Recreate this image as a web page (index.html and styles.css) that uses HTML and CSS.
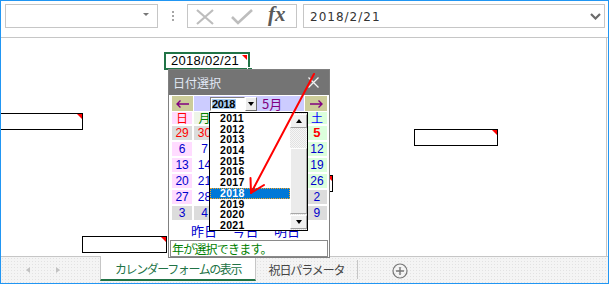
FILE: index.html
```html
<!DOCTYPE html>
<html lang="ja">
<head>
<meta charset="utf-8">
<title>日付選択</title>
<link rel="stylesheet" href="styles.css">
</head>
<body>
<div class="window">
  <div class="formula-bar">
    <div class="name-box"><span class="nb-arrow"></span></div>
    <div class="grip"><i></i><i></i><i></i></div>
    <div class="fx-buttons">
      <svg class="fx-icons" width="108" height="22" viewBox="0 0 108 22">
        <path d="M9 5 L25 19 M25 5 L9 19" stroke="#bdbdbd" stroke-width="2.2" fill="none"/>
        <path d="M44 12 L50 18 L64 5" stroke="#bdbdbd" stroke-width="2.6" fill="none"/>
      </svg>
      <span class="fx">fx</span>
    </div>
    <div class="formula-box">
      <span class="formula-text">2018/2/21</span>
      <svg class="chev" width="11" height="7" viewBox="0 0 11 7"><path d="M1 1 L5.5 5.5 L10 1" stroke="#6b6b6b" stroke-width="2.2" fill="none"/></svg>
    </div>
  </div>

  <div class="sheet">
    <div class="cell cell-active">2018/02/21<span class="note"></span><span class="handle"></span></div>
    <div class="cell cell-a"><span class="note"></span></div>
    <div class="cell cell-b"><span class="note"></span></div>
    <div class="cell cell-c"><span class="note"></span></div>
    <div class="cell cell-d"><span class="note"></span></div>
  </div>

  <div class="tabs">
    <div class="tab-nav"><span class="tri-l"></span><span class="tri-r"></span></div>
    <div class="tab tab-active">カレンダーフォームの表示</div>
    <div class="tab tab-plain">祝日パラメータ</div>
    <div class="tab-sep"></div>
    <svg class="add" width="16" height="16" viewBox="0 0 16 16"><circle cx="8" cy="8" r="7" stroke="#767676" stroke-width="1.2" fill="none"/><path d="M4 8 H12 M8 4 V12" stroke="#767676" stroke-width="1.4"/></svg>
  </div>

  <div class="dialog">
    <div class="dlg-title">
      <span>日付選択</span>
      <svg width="11" height="11" viewBox="0 0 11 11"><path d="M0.5 0.5 L10.5 10.5 M10.5 0.5 L0.5 10.5" stroke="#f2f2f2" stroke-width="1.3"/></svg>
    </div>
    <div class="dlg-body">
      <div class="cal-head">
        <div class="nav-btn nav-prev"><svg width="14" height="8" viewBox="0 0 14 8"><path d="M1 4 H13 M4.5 0.5 L1 4 L4.5 7.5" stroke="#800080" stroke-width="1.4" fill="none"/></svg></div>
        <div class="head-mid">
          <div class="combo">
            <div class="combo-field"><span>2018</span></div>
            <div class="combo-btn"><i></i></div>
          </div>
          <span class="month">5月</span>
        </div>
        <div class="nav-btn nav-next"><svg width="14" height="8" viewBox="0 0 14 8"><path d="M1 4 H13 M9.5 0.5 L13 4 L9.5 7.5" stroke="#800080" stroke-width="1.4" fill="none"/></svg></div>
      </div>
      <div class="cal-grid">
        <div class="dow sun">日</div><div class="dow wk mon">月</div><div class="dow wk"></div><div class="dow wk"></div><div class="dow wk"></div><div class="dow wk"></div><div class="dow sat">土</div>

        <div class="d out hol">29</div><div class="d out hol">30</div><div class="d"></div><div class="d"></div><div class="d"></div><div class="d"></div><div class="d satc hol strong">5</div>
        <div class="d sunc">6</div><div class="d">7</div><div class="d"></div><div class="d"></div><div class="d"></div><div class="d"></div><div class="d satc">12</div>
        <div class="d sunc">13</div><div class="d">14</div><div class="d"></div><div class="d"></div><div class="d"></div><div class="d"></div><div class="d satc">19</div>
        <div class="d sunc">20</div><div class="d">21</div><div class="d"></div><div class="d"></div><div class="d"></div><div class="d"></div><div class="d satc">26</div>
        <div class="d sunc">27</div><div class="d">28</div><div class="d"></div><div class="d"></div><div class="d"></div><div class="d out"></div><div class="d out">2</div>
        <div class="d out">3</div><div class="d out">4</div><div class="d out"></div><div class="d out"></div><div class="d out"></div><div class="d out"></div><div class="d out">9</div>
      </div>
      <div class="day-btns"><span>昨日</span><span>今日</span><span>明日</span></div>
      <div class="status">年が選択できます。</div>
    </div>

    <div class="dropdown">
      <ul class="dd-list">
        <li>2011</li><li>2012</li><li>2013</li><li>2014</li><li>2015</li><li>2016</li><li>2017</li><li class="sel">2018</li><li>2019</li><li>2020</li><li>2021</li>
      </ul>
      <div class="dd-scroll">
        <div class="sb-btn sb-up"><i></i></div>
        <div class="sb-gap"></div>
        <div class="sb-thumb"></div>
        <div class="sb-gap2"></div>
        <div class="sb-btn sb-down"><i></i></div>
      </div>
    </div>
  </div>

  <svg class="pointer" width="609" height="284" viewBox="0 0 609 284">
    <path d="M314 74 L251 193" stroke="#ff0000" stroke-width="2" stroke-linecap="round" fill="none"/>
    <path d="M264 185 L251 193 L250.5 178" stroke="#ff0000" stroke-width="2" stroke-linecap="round" stroke-linejoin="round" fill="none"/>
  </svg>
</div>
</body>
</html>
```

FILE: styles.css
```css
* { box-sizing: border-box; margin: 0; padding: 0; }

body {
  margin: 0;
  background: #fff;
  font-family: "Liberation Sans", "Noto Sans CJK JP", sans-serif;
}

.window {
  position: relative;
  width: 609px;
  height: 284px;
  border: 1px solid #2196f3;
  display: flex;
  flex-direction: column;
  overflow: hidden;
  background: #fff;
}

/* ---------- formula bar ---------- */
.formula-bar {
  flex: none;
  height: 37px;
  border-bottom: 1px solid #c6c6c6;
  display: flex;
  align-items: flex-start;
  padding: 3px 3px 0 4px;
}

.name-box {
  position: relative;
  width: 153px;
  height: 24px;
  border: 1px solid #c6c6c6;
}

.nb-arrow {
  position: absolute;
  left: 137px;
  top: 8px;
  width: 0;
  height: 0;
  border-left: 3px solid transparent;
  border-right: 3px solid transparent;
  border-top: 3px solid #777;
}

.grip {
  width: 29px;
  display: flex;
  flex-direction: column;
  align-items: center;
  gap: 2px;
  padding-top: 7px;
}

.grip i {
  display: block;
  width: 2px;
  height: 2px;
  background: #a6a6a6;
}

.fx-buttons {
  position: relative;
  width: 110px;
  height: 24px;
  border: 1px solid #c6c6c6;
}

.fx-icons { display: block; }

.fx {
  position: absolute;
  left: 80px;
  top: -3px;
  font-family: "Liberation Serif", serif;
  font-style: italic;
  font-weight: bold;
  font-size: 21px;
  color: #5a5a5a;
}

.formula-box {
  flex: 1;
  margin-left: 6px;
  height: 24px;
  border: 1px solid #c6c6c6;
  display: flex;
  align-items: center;
  padding: 2px 3px 0 6px;
}

.formula-text {
  font-family: "DejaVu Sans", sans-serif;
  font-size: 12px;
  letter-spacing: 1px;
  color: #333;
}

.chev { margin-left: auto; margin-top: -2px; }

/* ---------- sheet ---------- */
.sheet {
  flex: 1;
  min-height: 0;
  position: relative;
  margin-right: 1px;
  border-right: 1px solid #c6c6c6;
  overflow: hidden;
}

.cell {
  position: absolute;
  height: 17px;
  border: 1px solid #000;
  background: #fff;
}

.note {
  position: absolute;
  right: 0;
  top: 0;
  width: 0;
  height: 0;
  border-top: 5px solid #ff0000;
  border-left: 5px solid transparent;
}

.cell-active {
  left: 163px;
  top: 14px;
  width: 86px;
  height: 18px;
  border: 2px solid #217346;
  padding-left: 5px;
  font-size: 13px;
  line-height: 14px;
  letter-spacing: 0.3px;
  color: #000;
}

.cell-active .note { right: 1px; top: 1px; }

.handle {
  position: absolute;
  right: -5px;
  bottom: -5px;
  width: 6px;
  height: 6px;
  background: #217346;
  border: 1px solid #fff;
}

.cell-a { left: -1px; top: 75px; width: 83px; }
.cell-b { left: 81px; top: 198px; width: 85px; }
.cell-c { left: 413px; top: 91px; width: 84px; }
.cell-d { left: 247px; top: 137px; width: 85px; }

/* ---------- sheet tabs ---------- */
.tabs {
  flex: none;
  height: 27px;
  border-top: 1px solid #c6c6c6;
  display: flex;
  align-items: flex-start;
  background: #f4f4f4 radial-gradient(circle, #e2e2e2 0.7px, transparent 0.9px) 0 0 / 3px 3px;
}

.tab-nav {
  width: 99px;
  height: 26px;
  display: flex;
  align-items: center;
  padding-left: 25px;
  gap: 26px;
}

.tri-l, .tri-r {
  width: 0;
  height: 0;
  border-top: 3.5px solid transparent;
  border-bottom: 3.5px solid transparent;
}
.tri-l { border-right: 4px solid #c2c2c2; }
.tri-r { border-left: 4px solid #c2c2c2; }

.tab {
  height: 24px;
  display: flex;
  align-items: center;
  justify-content: center;
  font-family: "Noto Sans CJK JP", sans-serif;
  font-size: 12px;
  white-space: nowrap;
}

.tab-active {
  width: 156px;
  height: 25px;
  margin-top: -1px;
  background: #fff;
  border-left: 1px solid #c6c6c6;
  border-right: 1px solid #c6c6c6;
  border-bottom: 2px solid #217346;
  color: #217346;
  letter-spacing: -1.4px;
  padding-top: 1px;
}

.tab-plain {
  width: 101px;
  color: #444;
  letter-spacing: -1.1px;
}

.tab-sep {
  width: 1px;
  height: 19px;
  margin-top: 3px;
  background: #c6c6c6;
}

.add { margin-left: 34px; margin-top: 6px; }

/* ---------- dialog ---------- */
.dialog {
  position: absolute;
  left: 167px;
  top: 68px;
  width: 162px;
  height: 189px;
  border: 1px solid #808080;
  background: #fff;
  display: flex;
  flex-direction: column;
}

.dlg-title {
  flex: none;
  height: 25px;
  background: #747474;
  color: #e1e8f4;
  display: flex;
  align-items: center;
  justify-content: space-between;
  padding: 0 10px 0 4px;
  font-family: "Noto Sans CJK JP", sans-serif;
  font-size: 12px;
}

.dlg-body {
  flex: 1;
  padding: 1px 2px 0 3px;
}

.cal-head {
  display: flex;
  gap: 1px;
  height: 15px;
  margin-bottom: 1px;
}

.nav-btn {
  width: 21px;
  background: #cccc99;
  display: flex;
  align-items: center;
  justify-content: center;
}
.nav-next { width: 22px; }
.nav-btn svg { display: block; }

.head-mid {
  flex: 1;
  background: #ccccff;
  display: flex;
  align-items: flex-start;
  padding: 1px 0 0 16px;
}

.combo { display: flex; height: 14px; }

.combo-field {
  width: 35px;
  height: 14px;
  border: 1px solid;
  border-color: #808080 #fff #fff #808080;
  background: #fff;
  padding: 1px 0 0 1px;
}

.combo-field span {
  display: block;
  width: 24px;
  height: 10px;
  background: #a8cdf2;
  font-size: 11px;
  font-weight: bold;
  line-height: 10px;
  letter-spacing: -0.4px;
  color: #000;
}

.combo-btn {
  width: 12px;
  height: 14px;
  background: #ececec;
  border: 1px solid;
  border-color: #fff #707070 #707070 #fff;
  display: flex;
  align-items: center;
  justify-content: center;
}

.combo-btn i {
  width: 0;
  height: 0;
  border-left: 3.5px solid transparent;
  border-right: 3.5px solid transparent;
  border-top: 4px solid #000;
}

.month {
  margin-left: 5px;
  font-family: "Noto Sans CJK JP", sans-serif;
  font-size: 13px;
  line-height: 13px;
  color: #800080;
}

.cal-grid {
  display: grid;
  grid-template-columns: repeat(7, 1fr);
  grid-template-rows: 12px repeat(6, 14px);
  column-gap: 2.33px;
  row-gap: 2px;
}

.dow {
  font-family: "Noto Sans CJK JP", sans-serif;
  font-size: 12px;
  line-height: 12px;
  text-align: center;
}
.dow.sun { background: #ffdcff; color: #ff0000; }
.dow.wk { background: #eef5e8; color: #008000; }
.dow.sat { background: #dcffdc; color: #0000ff; }

.d {
  font-size: 12px;
  line-height: 14px;
  text-align: center;
  color: #0000cc;
  background: #fff;
}
.d.sunc { background: #ffdcff; }
.d.satc { background: #dcffdc; }
.d.out { background: #dcdcdc; }
.d.hol { color: #ff0000; }
.d.strong { font-weight: bold; font-size: 13px; }

.day-btns {
  height: 19px;
  margin-top: 1px;
  display: flex;
  gap: 17.5px;
  padding-left: 19px;
  font-family: "Noto Sans CJK JP", sans-serif;
  font-size: 13px;
  line-height: 19px;
  color: #0000cc;
}
.day-btns span { width: 24px; text-align: center; white-space: nowrap; }

.status {
  margin-left: -2px;
  width: 158px;
  height: 17px;
  border: 1px solid #8a8a8a;
  background: #fff;
  padding-left: 1px;
  font-family: "Noto Sans CJK JP", sans-serif;
  font-size: 12px;
  line-height: 15px;
  letter-spacing: -0.8px;
  color: #008000;
  white-space: nowrap;
}

/* ---------- year dropdown ---------- */
.dropdown {
  position: absolute;
  left: 40px;
  top: 42px;
  width: 99px;
  height: 119px;
  border: 1px solid #000;
  background: #fff;
  display: flex;
}

.dd-list {
  width: 80px;
  list-style: none;
}

.dd-list li {
  height: 10.7px;
  line-height: 10.7px;
  padding-left: 10px;
  font-size: 10.5px;
  font-weight: bold;
  letter-spacing: 0.3px;
  color: #000;
}

.dd-list li.sel {
  background: #0078d7;
  color: #fff;
  outline: 1px dotted #f5a623;
  outline-offset: -1px;
}

.dd-scroll {
  width: 17px;
  display: flex;
  flex-direction: column;
  background: #ececec repeating-conic-gradient(#e2e2e2 0 25%, #f6f6f6 0 50%) 0 0 / 2px 2px;
}

.sb-btn {
  height: 14px;
  flex: none;
  background: #f0f0f0;
  border: 1px solid;
  border-color: #fff #a0a0a0 #a0a0a0 #fff;
  display: flex;
  align-items: center;
  justify-content: center;
}
.sb-up { margin-top: 1px; }

.sb-up i, .sb-down i {
  width: 0;
  height: 0;
  border-left: 3.5px solid transparent;
  border-right: 3.5px solid transparent;
}
.sb-up i { border-bottom: 4px solid #000; }
.sb-down i { border-top: 4px solid #000; }

.sb-gap { height: 20px; flex: none; }
.sb-gap2 { height: 1px; flex: none; }

.sb-thumb {
  height: 66px;
  flex: none;
  background: #ebebeb;
  border: 1px solid;
  border-color: #fff #a8a8a8 #a8a8a8 #fff;
}

/* ---------- annotation arrow ---------- */
.pointer {
  position: absolute;
  left: -1px;
  top: -1px;
  pointer-events: none;
}
```
